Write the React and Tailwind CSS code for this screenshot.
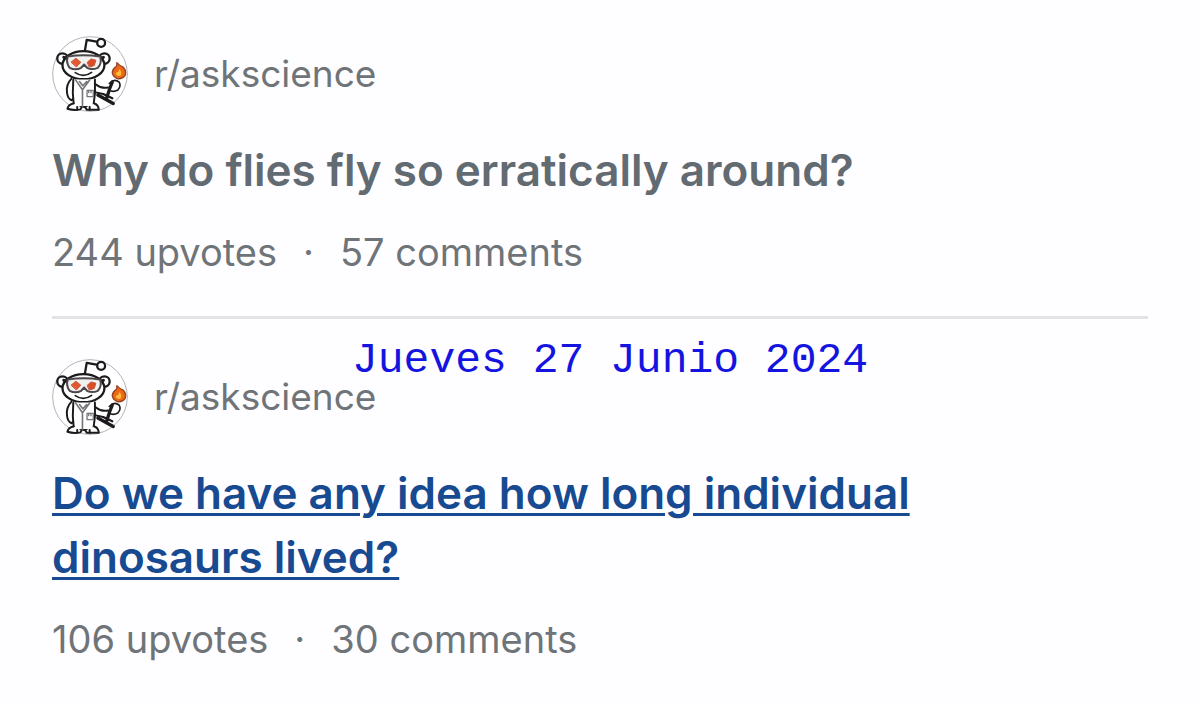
const posts = [
  {
    id: 1,
    subreddit: "r/askscience",
    title: "Why do flies fly so erratically around?",
    upvotes: 244,
    comments: 57,
    active: false,
  },
  {
    id: 2,
    subreddit: "r/askscience",
    title: "Do we have any idea how long individual dinosaurs lived?",
    upvotes: 106,
    comments: 30,
    active: true,
  },
];

const Avatar = () => (
  <svg
    className="size-19 shrink-0"
    viewBox="32 29 232 232"
    fill="none"
    stroke="#1c1a1c"
    strokeWidth="7"
    strokeLinecap="round"
    strokeLinejoin="round"
    aria-hidden="true"
  >
    <circle cx="148" cy="145" r="114" fill="#fff" stroke="#b0b0b5" strokeWidth="3" />
    {/* antenna */}
    <path d="M132 76 L138 41 L168 46" />
    <circle cx="182" cy="50" r="12" fill="#fff" />
    {/* ears and head */}
    <circle cx="64" cy="98" r="16" fill="#fff" />
    <circle cx="192" cy="98" r="16" fill="#fff" />
    <ellipse cx="128" cy="118" rx="64" ry="43" fill="#fff" />
    <path d="M103 141 Q128 158 153 140" strokeWidth="5" />
    {/* goggles */}
    <path d="M68 94 L83 99 M189 94 L175 99" strokeWidth="9" />
    <path
      d="M80 92 Q128 84 179 92 Q185 112 172 126 Q154 134 139 126 L130 116 L121 126 Q104 135 86 126 Q74 111 80 92Z"
      fill="#f3f0f0"
      stroke="#4b474a"
      strokeWidth="6"
    />
    <path d="M91 108 L105 97 L120 109 L107 123Z" fill="#e4582d" stroke="#c0583b" strokeWidth="3" />
    <path d="M140 109 L151 99 L166 103 L161 119 L147 124Z" fill="#dd4d25" stroke="#c0583b" strokeWidth="3" />
    {/* coat */}
    <path d="M91 160 Q74 177 78 203 Q80 221 92 225 L99 218" fill="#fff" strokeWidth="6" />
    <path d="M97 162 Q93 204 99 246 L158 246 Q166 204 163 162" fill="#fff" strokeWidth="6" />
    <path d="M104 163 L125 193 L147 163 M116 168 L126 181 L138 168 M125 192 L125 247" stroke="#77747a" strokeWidth="5" />
    <path d="M139 195 H158 V214 H139Z M144 194 V202 M151 194 V202" stroke="#77747a" strokeWidth="4" />
    <path d="M98 235 Q82 238 79 251 Q98 257 119 253 L122 247 M134 247 L138 254 H175 Q173 238 161 235" fill="#fff" strokeWidth="6" />
    <path d="M109 246 V254 M147 246 V254" strokeWidth="6" />
    {/* arm and burner */}
    <path d="M165 176 Q184 191 203 186 M166 201 L188 206" strokeWidth="6" />
    <path d="M216 170 L208 190 L199 218" strokeWidth="10" />
    <path d="M172 209 L219 235" strokeWidth="10" />
    <path d="M190 207 L216 219" strokeWidth="7" />
    <path d="M207 174 Q222 157 237 170 Q244 182 233 194 Q219 202 206 194" strokeWidth="5" />
    <path
      d="M230 110 Q236 118 248 123 Q261 136 255 150 Q246 162 231 159 Q216 153 216 140 Q217 129 228 122 Q231 117 230 110Z"
      fill="#ef6814"
      stroke="#934326"
      strokeWidth="4"
    />
    <path d="M237 130 Q247 139 242 149 Q234 154 227 146 Q226 139 234 139Z" fill="#ffbd3b" stroke="none" />
  </svg>
);

const Post = ({ post }) => (
  <article className="flex flex-col gap-[26px]">
    <div className="flex items-center gap-[26px]">
      <Avatar />
      <a href="#" className="text-[37px] leading-12 text-[#6f7478]">
        {post.subreddit}
      </a>
    </div>
    <h2 className="pr-20 text-[44px] leading-16 font-semibold">
      <a
        href="#"
        className={
          post.active
            ? "text-[#174a90] underline decoration-3 underline-offset-4"
            : "text-[#626a72]"
        }
      >
        {post.title}
      </a>
    </h2>
    <p className="flex gap-[26px] text-[38px] leading-12 text-[#6f7478]">
      <span>{post.upvotes} upvotes</span>
      <span>·</span>
      <span>{post.comments} comments</span>
    </p>
  </article>
);

export default function App() {
  return (
    <main className="min-h-screen bg-[#fefdff] px-[52px] py-9 font-['Inter',sans-serif]">
      <Post post={posts[0]} />
      <div className="relative my-10 border-t-3 border-[#e3e3e6]">
        <time
          dateTime="2024-06-27"
          className="absolute top-[18px] left-[300px] font-['Liberation_Mono',monospace] text-[43px] leading-12 whitespace-nowrap text-[#1414e0]"
        >
          Jueves 27 Junio 2024
        </time>
      </div>
      <Post post={posts[1]} />
    </main>
  );
}
